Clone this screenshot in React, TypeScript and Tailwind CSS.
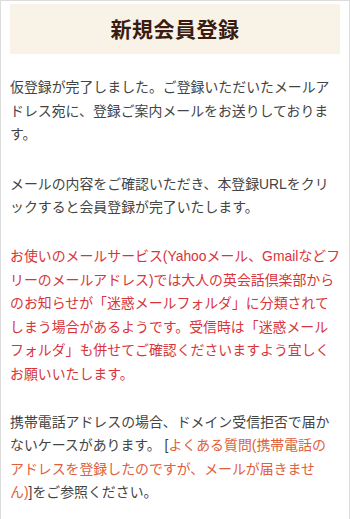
export default function App() {
  return (
    <div
      className="min-h-[519px] w-[350px] border-x border-t border-[#dcdcdc] bg-white pl-[9px] pr-[7.5px] pt-[3px] text-[13.9px] leading-[23.6px] text-[#444]"
      style={{ fontFamily: '"Liberation Sans", "Noto Sans CJK JP", sans-serif' }}
    >
      <div className="mr-[1.5px] flex h-[50px] items-center justify-center bg-[#f8f3e6]">
        <h1
          className="text-[21px] font-bold tracking-[0.5px] text-[#3b1c12]"
          style={{ fontFamily: '"Noto Sans CJK JP", sans-serif' }}
        >
          新規会員登録
        </h1>
      </div>

      <div className="mt-[22px]">
        <p className="mb-[26px]">
          仮登録が完了しました。ご登録いただいたメールアドレス宛に、登録ご案内メールをお送りしております。
        </p>
        <p className="mb-[25px]">
          メールの内容をご確認いただき、本登録URLをクリックすると会員登録が完了いたします。
        </p>
        <p className="mb-[24px] text-[#d7353b]">
          お使いのメールサービス(Yahooメール、Gmailなどフリーのメールアドレス)では大人の英会話倶楽部からのお知らせが「迷惑メールフォルダ」に分類されてしまう場合があるようです。受信時は「迷惑メールフォルダ」も併せてご確認くださいますよう宜しくお願いいたします。
        </p>
        <p>
          携帯電話アドレスの場合、ドメイン受信拒否で届かないケースがあります。 [
          <a href="#" className="text-[#e0603d]">
            よくある質問(携帯電話の
            <br />
            アドレスを登録したのですが、メールが届きませ
            <br />
            ん)
          </a>
          ]をご参照ください。
        </p>
      </div>
    </div>
  );
}
